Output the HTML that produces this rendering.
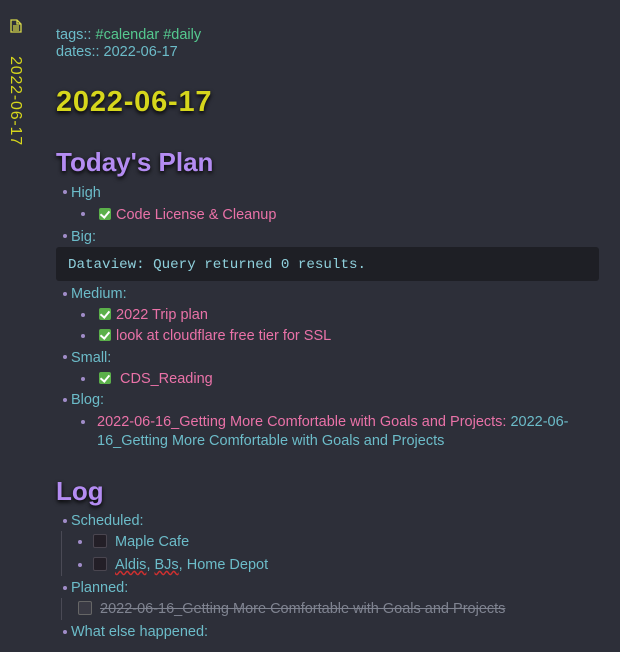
<!DOCTYPE html>
<html><head><meta charset="utf-8"><style>
body{margin:0;width:620px;height:652px;background:#2d2f39;font-family:"Liberation Sans",sans-serif;font-size:14.5px;color:#6cbcc9;overflow:hidden;position:relative}
.a{position:absolute;white-space:nowrap;line-height:16px;margin-top:1px}
.p{color:#ea72a8}.g{color:#55c98f}.y{color:#d6d61c}.v{color:#b48cf2}
.b{position:absolute;width:4px;height:4px;border-radius:2px;background:#a08cc8}
.ck{display:inline-block;width:12px;height:12px;background:#5bb04a;border-radius:2px;vertical-align:-1px;position:relative;margin-right:5px}
.ck:after{content:"";position:absolute;left:3px;top:1px;width:4px;height:7px;border:solid #fff;border-width:0 2px 2px 0;transform:rotate(40deg)}
.eb{display:inline-block;width:12px;height:12px;background:#231f27;border:1px solid #4a4650;border-radius:2px;vertical-align:-2px;margin-right:8px}
</style></head><body>
<svg style="position:absolute;left:10px;top:19px" width="12" height="14" viewBox="0 0 12 14"><path d="M1 1h6l4 4v8H1z M7 1v4h4 M3 7h6M3 9h6M3 11h6" fill="none" stroke="#d6d64a" stroke-width="1.3"/></svg>
<div class="a y" style="left:-30px;top:92px;width:90px;transform:rotate(90deg);font-size:16px;letter-spacing:0.8px;text-align:center">2022-06-17</div>
<div class="a" style="left:56px;top:26px">tags:: <span class="g">#calendar #daily</span></div>
<div class="a" style="left:56px;top:43px">dates:: 2022-06-17</div>
<div class="a y" style="left:56px;top:85px;font-size:29px;line-height:32px;font-weight:bold;letter-spacing:0.8px;text-shadow:0 2px 4px #000">2022-06-17</div>
<div class="a v" style="left:56px;top:146px;font-size:26px;line-height:30px;font-weight:bold;text-shadow:0 2px 4px #000">Today's Plan</div>
<i class="b" style="left:63px;top:190px"></i><div class="a" style="left:71px;top:184px">High</div>
<i class="b" style="left:81px;top:212px"></i><div class="a p" style="left:99px;top:206px"><span class="ck"></span>Code License &amp; Cleanup</div>
<i class="b" style="left:63px;top:234px"></i><div class="a" style="left:71px;top:228px">Big:</div>
<div style="position:absolute;left:56px;top:247px;width:543px;height:34px;background:#1e1f25;border-radius:3px"></div>
<div class="a" style="left:68px;top:256px;font-family:'Liberation Mono',monospace;font-size:14.2px;color:#8fd0dc">Dataview: Query returned 0 results.</div>
<i class="b" style="left:63px;top:292px"></i><div class="a" style="left:71px;top:285px">Medium:</div>
<i class="b" style="left:81px;top:313px"></i><div class="a p" style="left:99px;top:306px"><span class="ck"></span>2022 Trip plan</div>
<i class="b" style="left:81px;top:334px"></i><div class="a p" style="left:99px;top:327px"><span class="ck"></span>look at cloudflare free tier for SSL</div>
<i class="b" style="left:63px;top:355px"></i><div class="a" style="left:71px;top:349px">Small:</div>
<i class="b" style="left:81px;top:377px"></i><div class="a p" style="left:99px;top:370px"><span class="ck" style="margin-right:9px"></span>CDS_Reading</div>
<i class="b" style="left:63px;top:398px"></i><div class="a" style="left:71px;top:391px">Blog:</div>
<i class="b" style="left:81px;top:420px"></i><div class="a" style="left:97px;top:413px"><span class="p">2022-06-16_Getting More Comfortable with Goals and Projects:</span> 2022-06-</div>
<div class="a" style="left:97px;top:432px">16_Getting More Comfortable with Goals and Projects</div>
<div class="a v" style="left:56px;top:475px;font-size:26px;line-height:30px;font-weight:bold;text-shadow:0 2px 4px #000">Log</div>
<i class="b" style="left:63px;top:519px"></i><div class="a" style="left:71px;top:512px">Scheduled:</div>
<div style="position:absolute;left:61px;top:531px;width:1px;height:45px;background:#4a4a55"></div>
<i class="b" style="left:78px;top:540px"></i><div class="a" style="left:93px;top:533px"><span class="eb"></span>Maple Cafe</div>
<i class="b" style="left:78px;top:563px"></i><div class="a" style="left:93px;top:556px"><span class="eb"></span><span style="text-decoration:underline wavy #d03030">Aldis</span>, <span style="text-decoration:underline wavy #d03030">BJs</span>, Home Depot</div>
<i class="b" style="left:63px;top:586px"></i><div class="a" style="left:71px;top:579px">Planned:</div>
<div style="position:absolute;left:61px;top:598px;width:1px;height:22px;background:#4a4a55"></div>
<div class="a" style="left:78px;top:600px;color:#7f8390;text-decoration:line-through"><span class="eb" style="background:#3a3a44;border-color:#666;margin-right:8px"></span>2022-06-16_Getting More Comfortable with Goals and Projects</div>
<i class="b" style="left:63px;top:630px"></i><div class="a" style="left:71px;top:623px">What else happened:</div>
</body></html>
